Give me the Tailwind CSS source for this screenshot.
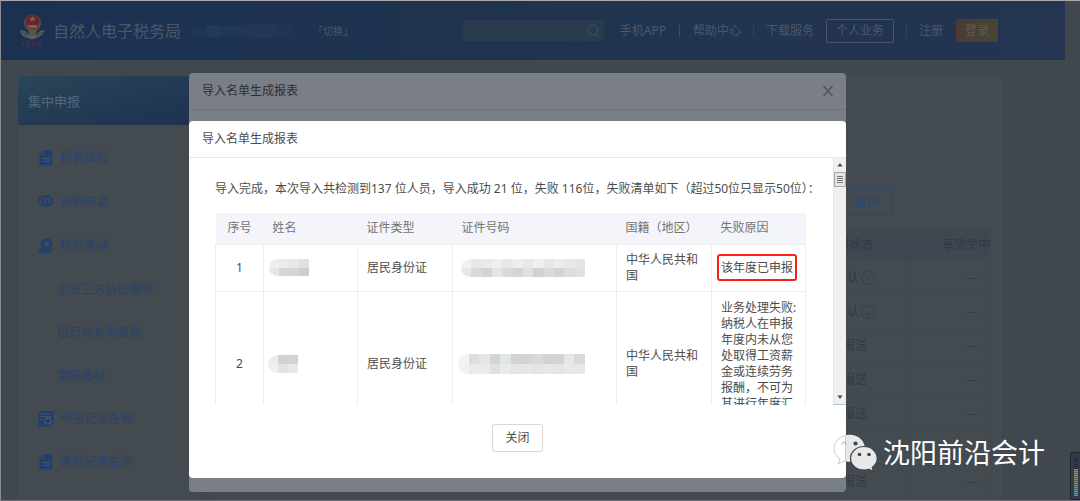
<!DOCTYPE html>
<html lang="zh-CN">
<head>
<meta charset="utf-8">
<title>自然人电子税务局</title>
<script src="https://cdn.jsdelivr.net/npm/@tailwindcss/browser@4"></script>
</head>
<body class="font-['Noto_Sans','Noto_Sans_CJK_SC',sans-serif] text-[12px] leading-4 text-[#4d4d4d]">
<div class="relative h-screen overflow-hidden border-t border-l border-b border-t-[#a9a9a9] border-l-[#8b8d90] border-b-[#6b7078] bg-[#41474f]">

  <!-- Page header -->
  <header class="mr-[15px] flex h-[59px] items-center bg-linear-to-r from-[#1c3152] via-[#20344f] to-[#243451] pl-[18px] pr-[67px] text-[#4c5867]">
    <svg class="h-[36px] w-[27px]" viewBox="0 0 27 36" aria-hidden="true">
      <path d="M1 17l5 1q3 4 7.500 5 4.500-1 7.500-5l5-1-2 3-1 2-3 2-7 2.500-7-2.500-3-2-1-2z" fill="#56605f"/>
      <path d="M3 19l5 2M5 22l5 1M24 19l-5 2M22 22l-5 1" stroke="#2b3b52" stroke-width=".7"/>
      <circle cx="13.500" cy="10" r="8.500" fill="#5f4a38"/>
      <circle cx="13.500" cy="9" r="7" fill="#66243a"/>
      <path d="M13.500 3l1 2h2l-1.500 1.500.5 2-2-1-2 1 .5-2L10.500 5h2z" fill="#80603a"/>
      <path d="M8 12h11l-2 3h-7z" fill="#80603a"/>
      <path d="M9 17h9l-2 6h-5z" fill="#5c543e"/>
      <path d="M3 29l2 1M4 28v5M8 29h3M9 28l-1 4 3 1M13 30h3M14 28v5M18 29v4M20 28l3 1M21 29l-1 4h3" stroke="#4e3048" stroke-width="1.300" fill="none"/>
    </svg>
    <h1 class="ml-[7px] text-[16px] leading-6">自然人电子税务局</h1>
    <span class="ml-[10px] flex items-center opacity-60">
      <span class="h-[10px] w-[16px] bg-[#203756]"></span>
      <span class="h-[12px] w-[12px] bg-[#2b4058]"></span>
      <span class="h-[10px] w-[26px] bg-[#253c58]"></span>
      <span class="h-[14px] w-[32px] bg-[#263b56]"></span>
      <span class="h-[12px] w-[16px] bg-[#203755]"></span>
    </span>
    <a href="#" class="ml-[20px] text-[10px]">「切换」</a>
    <form class="ml-auto flex h-[21px] w-[141px] items-center bg-[#2a3b50] pr-[4px]">
      <input type="text" aria-label="搜索" class="h-full min-w-0 flex-1 bg-transparent px-2 outline-none">
      <svg class="size-[13px]" viewBox="0 0 13 13" fill="none" stroke="#45525f" aria-hidden="true"><circle cx="6" cy="6" r="5"/><path d="M9.500 10l2.500 2.500"/></svg>
    </form>
    <nav class="ml-[16px] flex items-center whitespace-nowrap">
      <a href="#">手机APP</a>
      <span class="mx-[13px] h-[13px] w-px bg-[#3c4a5b]"></span>
      <a href="#">帮助中心</a>
      <span class="mx-[12px] h-[13px] w-px bg-[#344253]"></span>
      <a href="#">下载服务</a>
      <button type="button" class="ml-[12px] h-[24px] w-[68px] rounded-[2px] border border-[#4a5563]">个人业务</button>
      <span class="mx-[12px] h-[13px] w-px bg-[#344253]"></span>
      <a href="#">注册</a>
      <button type="button" class="ml-[13px] h-[23px] w-[42px] rounded-[1px] bg-linear-to-r from-[#4b3a34] to-[#474632] text-[#5e5c50]">登录</button>
    </nav>
  </header>

  <div class="mr-[78px] ml-[17px] mt-[16px] flex h-[440px] gap-[12px]">
    <!-- Sidebar -->
    <aside class="w-[182px] bg-[#434a50] text-[#2b4268]">
      <h2 class="flex h-[49px] items-center rounded-tl-[4px] bg-linear-to-br from-[#2b4558] to-[#1c3150] pl-[10px] text-[13px] text-[#53677a]">集中申报</h2>
      <ul class="pt-[11px]">
        <li class="flex h-[44px] items-center"><a href="#" class="flex items-center gap-[6px] pl-[20px]">
          <svg class="size-[16px]" viewBox="0 0 16 16" aria-hidden="true"><path d="M6 0h7.500q1 0 1 1v13.500q0 1-1 1h-11q-1 0-1-1V5H5q1 0 1-1zM5 0v4H1.500z" fill="#243f6b"/><path d="M5 8.500h7M5 11.500h7" stroke="#47566a"/></svg>报表填报</a></li>
        <li class="flex h-[44px] items-center"><a href="#" class="flex items-center gap-[6px] pl-[20px]">
          <svg class="size-[16px]" viewBox="0 0 16 16" aria-hidden="true"><circle cx="9" cy="7" r="6" fill="#243f6b"/><circle cx="9" cy="7" r="3.500" fill="#3b4d68"/><path d="M7 6h4M7 8h4M9 5v5" stroke="#243f6b"/><path d="M3 1.500Q-1 7 3 12.500" fill="none" stroke="#243f6b" stroke-width="1.300"/></svg>退税申请</a></li>
        <li class="flex h-[44px] items-center"><a href="#" class="flex items-center gap-[6px] pl-[20px]">
          <svg class="size-[16px]" viewBox="0 0 16 16" aria-hidden="true"><circle cx="8.500" cy="6" r="6" fill="#243f6b"/><path d="M6 4h5M6 6.500h5M8.500 3v6M7 9l3-2" stroke="#47566a" stroke-width=".8"/><path d="M0 11l3-1q3 0 5 2h2l5-2q2 0 0 2l-4 3q-1 .5-4 .5H1q-1 0-1-1z" fill="#243f6b" stroke="#434a50" stroke-width=".5"/></svg>税款缴纳</a></li>
        <li class="flex h-[43px] items-center pl-[39px]"><a href="#">企业三方协议缴税</a></li>
        <li class="flex h-[43px] items-center pl-[39px]"><a href="#">银行端查询缴税</a></li>
        <li class="flex h-[43px] items-center pl-[39px]"><a href="#">银联缴税</a></li>
        <li class="flex h-[43px] items-center"><a href="#" class="flex items-center gap-[6px] pl-[20px]">
          <svg class="size-[16px]" viewBox="0 0 16 16" aria-hidden="true"><rect x=".5" width="15" height="15.500" rx="1" fill="#243f6b"/><path d="M2 3h12M2 5.500h12M2 8.500h3" stroke="#47566a" stroke-width=".8"/><circle cx="10" cy="10" r="3" fill="none" stroke="#47566a" stroke-width="1.300"/><path d="M12 12l3 3.500" stroke="#47566a" stroke-width="1.300"/></svg>申报记录查询</a></li>
        <li class="flex h-[43px] items-center"><a href="#" class="flex items-center gap-[6px] pl-[20px]">
          <svg class="size-[16px]" viewBox="0 0 16 16" aria-hidden="true"><path d="M6 0h7.500q1 0 1 1v13.500q0 1-1 1h-11q-1 0-1-1V5H5q1 0 1-1zM5 0v4H1.500z" fill="#243f6b"/><path d="M5 8.500h7M5 11.500h7" stroke="#47566a"/></svg>缴款记录查询</a></li>
      </ul>
    </aside>

    <!-- Record list behind the dialogs -->
    <main class="min-w-0 flex-1 bg-[#434a50] pr-[11px] pt-[112px] text-[#303a46]">
      <div class="flex justify-end pr-[99px]">
        <button type="button" class="h-[28px] w-[51px] rounded-[2px] border border-[#2c4674] text-[#2b4673]">查询</button>
      </div>
      <div class="mt-[13px] overflow-hidden border-r border-[#404750]">
        <table class="w-[calc(100%+44px)] table-fixed text-center">
          <thead><tr class="h-[32px] bg-[#414750]"><th></th><th class="w-[123px] font-normal">申报状态</th><th class="w-[123px] font-normal whitespace-nowrap">享受免申报</th></tr></thead>
          <tbody class="[&_td]:border [&_td]:border-[#3f474f]">
            <tr class="h-[34px]"><td></td><td><span class="flex items-center justify-center gap-[2px]">待确认<svg class="size-[14px]" viewBox="0 0 14 14" fill="none" stroke="#333d48" stroke-width=".8" aria-hidden="true"><circle cx="7" cy="7" r="6.500"/><path d="M7 3.500v1M7 6v5"/></svg></span></td><td class="font-['Liberation_Sans']">--</td></tr>
            <tr class="h-[34px]"><td></td><td><span class="flex items-center justify-center gap-[2px]">待确认<svg class="size-[14px]" viewBox="0 0 14 14" fill="none" stroke="#333d48" stroke-width=".8" aria-hidden="true"><circle cx="7" cy="7" r="6.500"/><path d="M7 3.500v1M7 6v5"/></svg></span></td><td class="font-['Liberation_Sans']">--</td></tr>
            <tr class="h-[34px]"><td></td><td>未报送</td><td class="font-['Liberation_Sans']">--</td></tr>
            <tr class="h-[34px]"><td></td><td>未报送</td><td class="font-['Liberation_Sans']">--</td></tr>
            <tr class="h-[34px]"><td></td><td>未报送</td><td class="font-['Liberation_Sans']">--</td></tr>
            <tr class="h-[34px]"><td></td><td></td><td></td></tr>
            <tr class="h-[34px]"><td></td><td>未报送</td><td class="font-['Liberation_Sans']">--</td></tr>
          </tbody>
        </table>
      </div>
    </main>
  </div>

  <!-- Lower dialog -->
  <section class="absolute top-[72px] right-[234px] bottom-[8px] left-[188px] rounded-[4px] bg-[#7a7e86] text-[#2c2f34]">
    <header class="flex h-[37px] items-center justify-between border-b border-[#6f747c] pr-[12px] pl-[13px]">
      <h2>导入名单生成报表</h2>
      <button type="button" aria-label="关闭对话框"><svg class="size-[12px]" viewBox="0 0 12 12" stroke="#4e535a" stroke-width="1.200" aria-hidden="true"><path d="M1.500 1l9 10M10.500 1l-9 10"/></svg></button>
    </header>
  </section>

  <!-- Import result dialog -->
  <section role="dialog" aria-labelledby="dlg" class="absolute top-[120px] right-[234px] bottom-[22px] left-[188px] flex flex-col rounded-[4px] bg-white">
    <header class="flex h-[37px] shrink-0 items-center border-b border-[#e8e8e8] pl-[13px]"><h2 id="dlg">导入名单生成报表</h2></header>
    <div class="flex min-h-0 flex-1">
      <div class="min-w-0 flex-1 overflow-hidden pr-[27px] pl-[26px]">
        <p class="pt-[23px] whitespace-nowrap">导入完成，本次导入共检测到137 位人员，导入成功 21 位，失败 116位，失败清单如下（超过50位只显示50位）：</p>
        <table class="mt-[16px] w-full table-fixed border-collapse text-left [&_td]:border [&_td]:border-[#eeeef0] [&_td]:py-0 [&_td]:pr-[4px] [&_td]:pl-[9px] [&_th]:px-[9px] [&_th]:py-0 [&_th]:font-normal">
          <thead>
            <tr class="h-[31px] bg-[#f4f5fa] text-[#737373]">
              <th class="w-[48px] text-center">序号</th><th class="w-[94px]">姓名</th><th class="w-[95px]">证件类型</th><th class="w-[164px]">证件号码</th><th class="w-[95px] whitespace-nowrap">国籍（地区）</th><th class="w-[94px]">失败原因</th>
            </tr>
          </thead>
          <tbody>
            <tr class="h-[47px]">
              <td><div class="pr-[5px] text-center">1</div></td>
              <td><div class="-ml-[4px] grid h-[17px] w-[40px] grid-cols-4 overflow-hidden rounded-l-full"><i class="bg-[#efeeee]"></i><i class="bg-[#ebe9ea]"></i><i class="bg-[#e8e7e8]"></i><i class="bg-[#dde0e5]"></i><i class="bg-[#e7e6e6]"></i><i class="bg-[#dad5d5]"></i><i class="bg-[#d6d4d5]"></i><i class="bg-[#c9cfd3]"></i></div></td>
              <td>居民身份证</td>
              <td><div class="-ml-[1px] grid h-[18px] w-[124px] grid-cols-12 overflow-hidden rounded-l-full rounded-r-[3px]"><i class="bg-[#f1f1f1]"></i><i class="bg-[#e8e7e8]"></i><i class="bg-[#eaeaea]"></i><i class="bg-[#eef0f0]"></i><i class="bg-[#e9e9ea]"></i><i class="bg-[#efeeee]"></i><i class="bg-[#e7e8e8]"></i><i class="bg-[#efeff0]"></i><i class="bg-[#e6e6e7]"></i><i class="bg-[#ebebec]"></i><i class="bg-[#e8e8e8]"></i><i class="bg-[#e3e4e5]"></i><i class="bg-[#e8e8e8]"></i><i class="bg-[#d6d9dd]"></i><i class="bg-[#d3d3d4]"></i><i class="bg-[#e5e5e6]"></i><i class="bg-[#dadada]"></i><i class="bg-[#d7d3d5]"></i><i class="bg-[#dfe1e1]"></i><i class="bg-[#d2d1d2]"></i><i class="bg-[#dadada]"></i><i class="bg-[#d7d3d4]"></i><i class="bg-[#dcdddd]"></i><i class="bg-[#e0e1e2]"></i></div></td>
              <td>中华人民共和国</td>
              <td><span class="-mx-[4px] flex h-[27px] w-[80px] items-center justify-center rounded-[3px] border-2 border-[#fb1f18] whitespace-nowrap">该年度已申报</span></td>
            </tr>
            <tr class="h-[145px]">
              <td><div class="pr-[5px] text-center">2</div></td>
              <td><div class="-ml-[5px] grid h-[18px] w-[30px] grid-cols-3 overflow-hidden rounded-l-full"><i class="bg-[#efedec]"></i><i class="bg-[#d0d1d6]"></i><i class="bg-[#d1d3d5]"></i><i class="bg-[#f0efee]"></i><i class="bg-[#e2e2e2]"></i><i class="bg-[#e8eae9]"></i></div></td>
              <td>居民身份证</td>
              <td><div class="-ml-[4px] grid h-[20px] w-[127px] grid-cols-12 overflow-hidden rounded-l-full rounded-r-[3px]"><i class="bg-[#f4f2f2]"></i><i class="bg-[#dcdde1]"></i><i class="bg-[#e6e4e4]"></i><i class="bg-[#d4d4d6]"></i><i class="bg-[#e3e6e6]"></i><i class="bg-[#d6d0d2]"></i><i class="bg-[#d3d4d6]"></i><i class="bg-[#dad9d9]"></i><i class="bg-[#d6d2d3]"></i><i class="bg-[#d2d4d7]"></i><i class="bg-[#e7e7e7]"></i><i class="bg-[#d7d9da]"></i><i class="bg-[#f3f1f1]"></i><i class="bg-[#e8ebec]"></i><i class="bg-[#ebeaea]"></i><i class="bg-[#dfe0e1]"></i><i class="bg-[#e9ebea]"></i><i class="bg-[#e3e4e4]"></i><i class="bg-[#e6e8e8]"></i><i class="bg-[#e4e4e4]"></i><i class="bg-[#e7e7e7]"></i><i class="bg-[#e3e5e5]"></i><i class="bg-[#e9e9e9]"></i><i class="bg-[#e6e8e8]"></i></div></td>
              <td>中华人民共和国</td>
              <td>业务处理失败:纳税人在申报年度内未从您处取得工资薪金或连续劳务报酬，不可为其进行年度汇算申报</td>
            </tr>
          </tbody>
        </table>
      </div>
      <div class="flex w-[13px] flex-col items-center border-l border-b border-l-[#e4e4e4] border-b-[#b5c6d6] bg-[#f0f0f0]" aria-hidden="true">
        <svg class="h-[14px] w-[12px] shrink-0" viewBox="0 0 12 14"><path d="M3.500 8.500L6 5l2.500 3.500z" fill="#444"/></svg>
        <div class="flex h-[15px] w-[12px] flex-col items-center justify-center gap-px rounded-[1px] border border-[#a6a6a6] bg-[#e4e4e4]">
          <span class="h-px w-[6px] bg-[#777]"></span><span class="h-px w-[6px] bg-[#777]"></span><span class="h-px w-[6px] bg-[#777]"></span><span class="h-px w-[6px] bg-[#777]"></span>
        </div>
        <svg class="mt-auto h-[14px] w-[12px] shrink-0" viewBox="0 0 12 14"><path d="M3.500 5.500h5L6 9z" fill="#444"/></svg>
      </div>
    </div>
    <footer class="flex h-[73px] shrink-0 items-center justify-center pb-[7px]">
      <button type="button" class="h-[28px] w-[51px] rounded-[3px] border border-[#d9d9d9] bg-white">关闭</button>
    </footer>
  </section>

  <!-- Channel watermark -->
  <div class="absolute right-[35px] bottom-[28px] flex items-center gap-[6px] text-[27px] leading-9 text-white">
    <svg class="h-[38px] w-[44px]" viewBox="0 0 44 38" aria-hidden="true">
      <path d="M16.500.8C8 .8 1 7 1 14.500c0 4.500 2.300 8 6 10.500l-1.500 5 5.500-3c2 .6 3.500.8 5.500.8C25 27.800 32 22 32 14.500S25 .8 16.500.8z" fill="#e8e8e8"/>
      <path d="M12.500 1.500C5.500 3.500 1 8.500 1 14.500c0 4.500 2.300 8 6 10.500l-1.500 5 5.500-3 1.500.4z" fill="#fff" stroke="#b9b9b9" stroke-width=".7"/>
      <path d="M9 10.500q.3-2.500 2-2.500t2 2.500" fill="none" stroke="#999" stroke-width=".8"/><circle cx="22.500" cy="9.500" r="2.100" fill="#3d454d"/>
      <path d="M31 12.500c-7.500 0-13.500 5.300-13.500 11.800S23.500 36 31 36c1.700 0 3.300-.3 4.800-.8l4.700 2.300-1.300-4c3-2.100 5-5.400 5-9.200 0-6.500-5.700-11.800-13.200-11.800z" fill="#e8e8e8" stroke="#3d454d" stroke-width="1.200"/>
      <circle cx="26.500" cy="20.500" r="1.800" fill="#3d454d"/><circle cx="36" cy="20.500" r="1.800" fill="#3d454d"/>
    </svg>
    <span>沈阳前沿会计</span>
  </div>

  <!-- Level meter at the window edge -->
  <div class="absolute right-0 bottom-0 h-[48px] w-[10px] rounded-l-[3px] border border-r-0 border-[#1e2430] bg-[#343a4a] py-[5px] pl-[3px]" aria-hidden="true">
    <svg class="h-[38px] w-[4px]" viewBox="0 0 4 38" preserveAspectRatio="none">
      <defs><linearGradient id="lv" x1="0" y1="0" x2="0" y2="38" gradientUnits="userSpaceOnUse"><stop offset=".3" stop-color="#a98d43"/><stop offset=".65" stop-color="#6f9450"/><stop offset="1" stop-color="#2fae9b"/></linearGradient></defs>
      <path d="M2 0v11" stroke="#232938" stroke-width="4" stroke-dasharray="1 1"/>
      <path d="M1.990 11L2.010 38" stroke="url(#lv)" stroke-width="4" stroke-dasharray="1.500 .5"/>
    </svg>
  </div>
</div>
</body>
</html>
